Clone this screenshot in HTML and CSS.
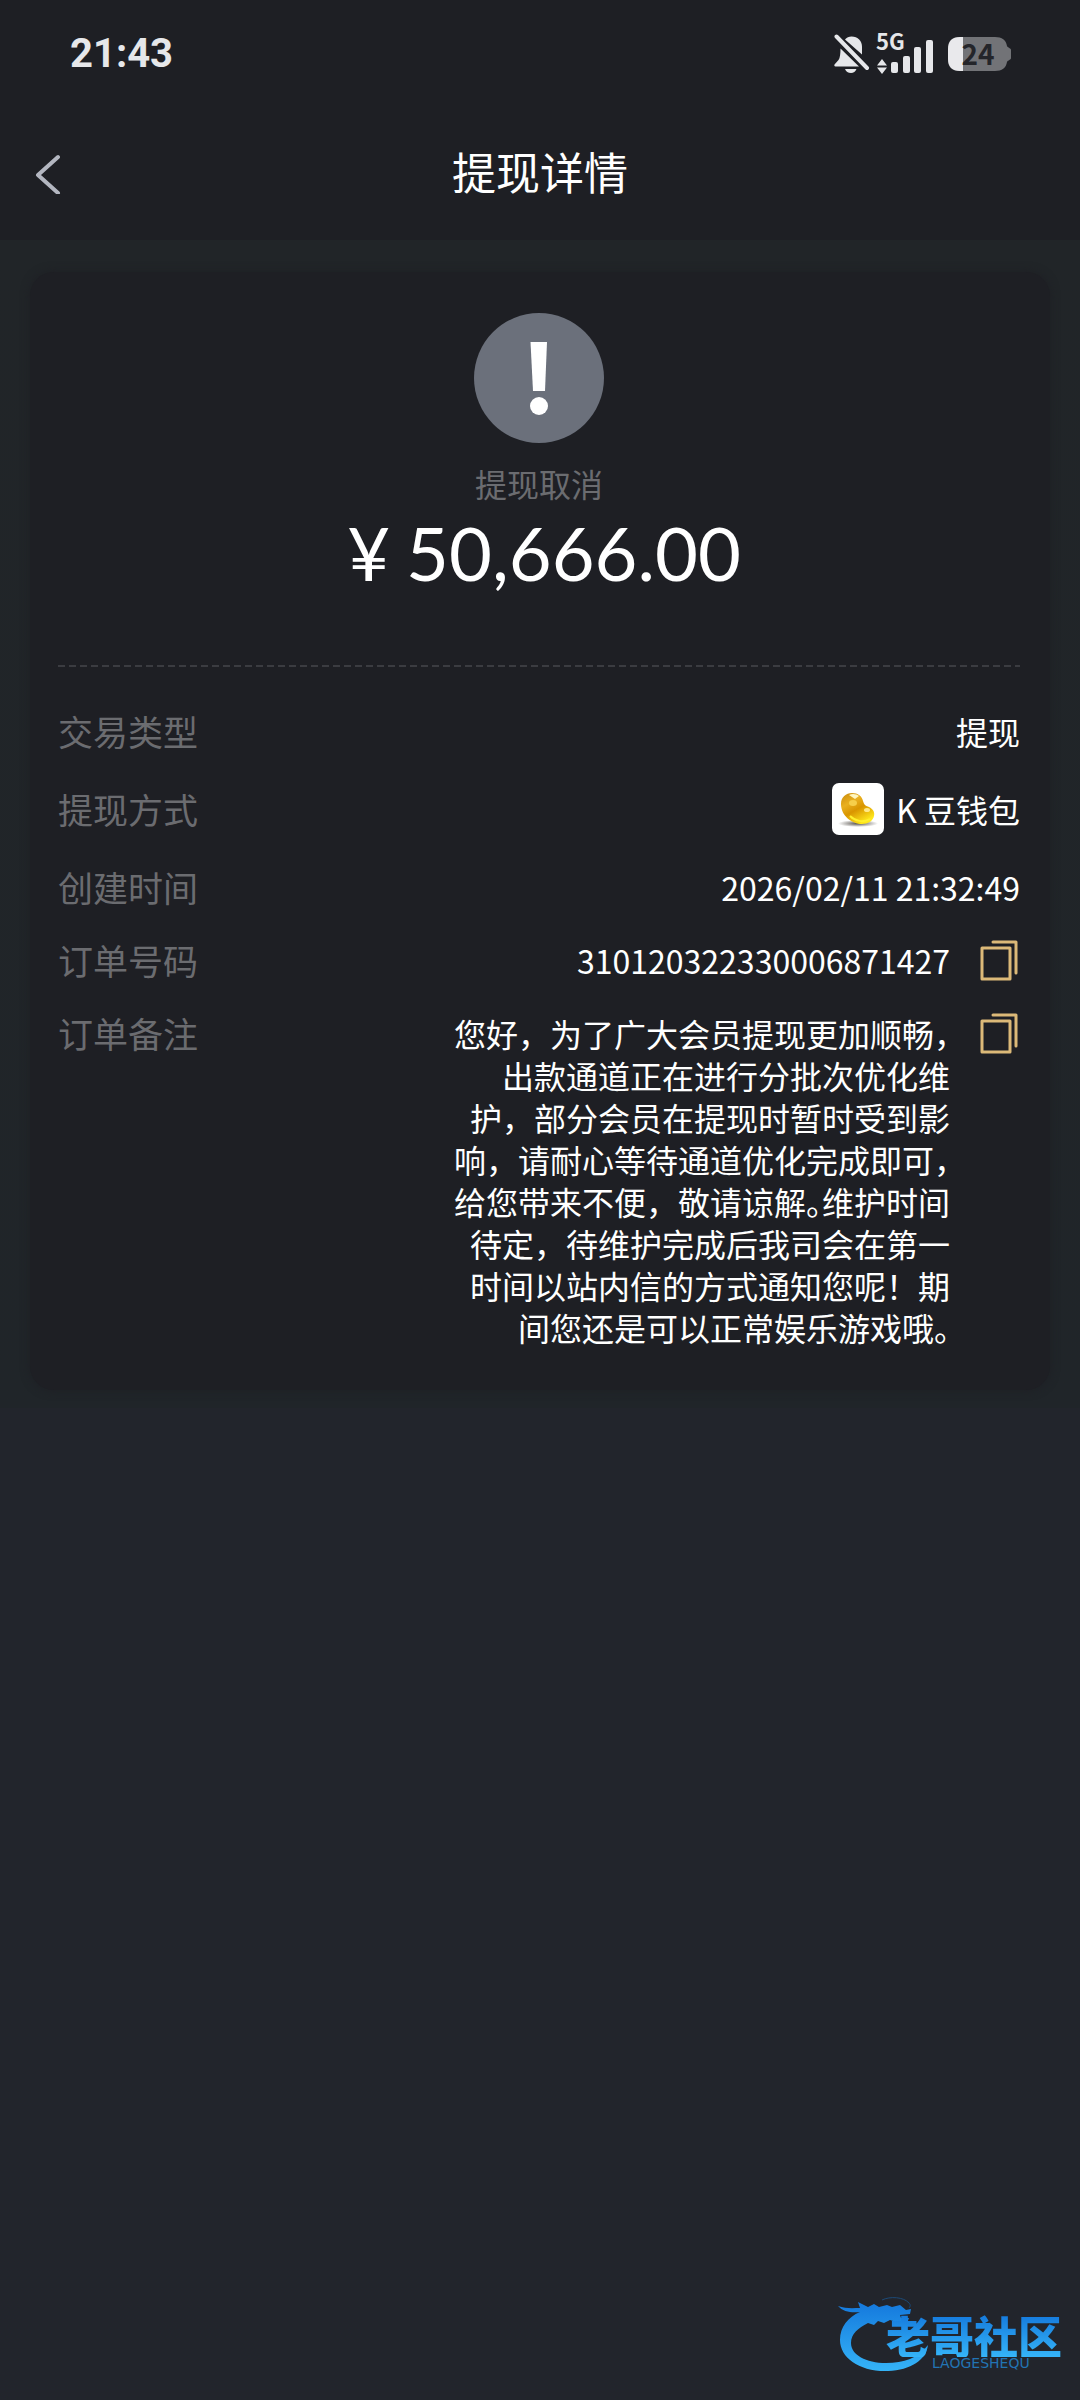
FILE: index.html
```html
<!DOCTYPE html>
<html lang="zh-CN">
<head>
<meta charset="utf-8">
<meta name="viewport" content="width=device-width, initial-scale=1">
<title>提现详情</title>
<link rel="stylesheet" href="styles.css">
</head>
<body>
<header class="top">
  <div class="status">
    <time class="clock">21:43</time>
    <div class="indicators">
      <svg class="bell" width="36" height="40" viewBox="0 0 36 40" aria-label="静音">
        <g fill="#e6e7ea">
          <path d="M11 5.500C12.500 3.500 15 2.500 17.500 2.500C24 2.500 28 7 28 13V20.500Z"/>
          <path d="M6.500 14.500L25 32.500H1.500C0.500 32.500 0 31.500 0.500 30.500L4.500 26C6 24 6.500 20 6.500 14.500Z"/>
          <path d="M11 35H22.500C21.500 37.500 19.500 39 17 39C14 39 12 37.500 11 35Z"/>
        </g>
        <path d="M2.500 2.500L33 34" fill="none" stroke="#e6e7ea" stroke-width="4" stroke-linecap="round"/>
      </svg>
      <div class="signal">
        <span class="net">5G</span>
        <svg width="58" height="40" viewBox="0 0 58 40" aria-hidden="true">
          <g fill="#e6e7ea">
            <path d="M6 25L11 31.500H1ZM6 40L1 33.500H11Z"/>
            <rect x="15" y="28" width="7" height="11" rx="2"/>
            <rect x="27" y="22" width="7" height="17" rx="2"/>
            <rect x="38" y="13" width="7" height="26" rx="2"/>
            <rect x="50" y="6" width="7" height="33" rx="2"/>
          </g>
        </svg>
      </div>
      <div class="battery">
        <svg width="64" height="34" viewBox="0 0 64 34" aria-hidden="true">
          <path d="M12 0H47C54 0 58 3 59 9C60 11 63 11 63 13V21C63 23 60 23 59 25C58 31 54 34 47 34H12C4 34 0 30 0 22V12C0 4 4 0 12 0Z" fill="#727377"/>
          <path d="M15 0H12C4 0 0 4 0 12V22C0 30 4 34 12 34H15Z" fill="#e9e9ec"/>
        </svg>
        <span class="level">24</span>
      </div>
    </div>
  </div>
  <nav class="bar">
    <button class="back" type="button" aria-label="返回">
      <svg width="26" height="40" viewBox="0 0 26 40" aria-hidden="true"><path d="M23 3L3 21L23 39" fill="none" stroke="#b3b6c0" stroke-width="4" stroke-linecap="round" stroke-linejoin="round"/></svg>
    </button>
    <h1 class="title">提现详情</h1>
  </nav>
</header>

<main class="page">
  <section class="card">
    <div class="summary">
      <svg class="mark" width="130" height="130" viewBox="0 0 130 130" aria-hidden="true">
        <circle cx="65" cy="65" r="65" fill="#6b707b"/>
        <path d="M56.500 29H73L71 78H59Z" fill="#fff"/>
        <circle cx="65" cy="93" r="9" fill="#fff"/>
      </svg>
      <p class="state">提现取消</p>
      <p class="amount"><span class="yen">¥</span><span>50,666.00</span></p>
    </div>
    <svg class="rule" height="2" aria-hidden="true"><line x1="0" y1="1" x2="100%" y2="1" stroke="#3b3c41" stroke-width="2" stroke-dasharray="7 4"/></svg>
    <dl class="details">
      <div class="row"><dt>交易类型</dt><dd>提现</dd></div>
      <div class="row wallet">
        <dt>提现方式</dt>
        <dd>
          <svg width="52" height="52" viewBox="0 0 52 52" aria-hidden="true">
            <defs>
              <linearGradient id="bean" x1="0" y1="0" x2="0.600" y2="1">
                <stop offset="0" stop-color="#c98a0c"/><stop offset="0.350" stop-color="#e9b020"/>
                <stop offset="0.600" stop-color="#d99500"/><stop offset="1" stop-color="#ffe81c"/>
              </linearGradient>
              <radialGradient id="shade"><stop offset="0" stop-color="#55504a"/><stop offset="1" stop-color="#fff"/></radialGradient>
            </defs>
            <rect width="52" height="52" rx="7" fill="#fff"/>
            <ellipse cx="26" cy="40.500" rx="20" ry="3.500" fill="url(#shade)"/>
            <path d="M9 21C9 14 14 10 20 10C26 10 30 13 31 18C32 22 34 23 37 24C41 26 43 29 42 33C41 38 36 41 30 41C20 41 9 33 9 21Z" fill="url(#bean)"/>
            <path d="M17 12C20 10 25 11 27 13L23 16Z" fill="#fff6c0"/>
            <ellipse cx="21" cy="20" rx="4" ry="3" fill="#f6cf4a"/>
            <ellipse cx="35" cy="27" rx="3" ry="2" fill="#ffe88a"/>
            <path d="M18 33C23 38 31 40 38 36" fill="none" stroke="#fff02e" stroke-width="2"/>
          </svg>
          <span>K 豆钱包</span>
        </dd>
      </div>
      <div class="row"><dt>创建时间</dt><dd>2026/02/11 21:32:49</dd></div>
      <div class="row">
        <dt>订单号码</dt>
        <dd>
          <span>310120322330006871427</span>
          <button class="copy" type="button" aria-label="复制订单号码">
            <svg width="40" height="42" viewBox="0 0 40 42" aria-hidden="true"><g fill="none" stroke="#dcb978" stroke-width="3" stroke-linejoin="round" stroke-linecap="round"><rect x="2" y="9" width="28" height="31"/><path d="M13 3H36V34"/></g></svg>
          </button>
        </dd>
      </div>
      <div class="row">
        <dt>订单备注</dt>
        <dd>
          <p class="note">
            <span>您好，为了广大会员提现更加顺畅<i>，</i></span>
            <span>出款通道正在进行分批次优化维</span>
            <span>护，部分会员在提现时暂时受到影</span>
            <span>响，请耐心等待通道优化完成即可<i>，</i></span>
            <span>给您带来不便，敬请谅解<i>。</i>维护时间</span>
            <span>待定，待维护完成后我司会在第一</span>
            <span>时间以站内信的方式通知您呢！期</span>
            <span>间您还是可以正常娱乐游戏哦<i>。</i></span>
          </p>
          <button class="copy" type="button" aria-label="复制订单备注">
            <svg width="40" height="42" viewBox="0 0 40 42" aria-hidden="true"><g fill="none" stroke="#dcb978" stroke-width="3" stroke-linejoin="round" stroke-linecap="round"><rect x="2" y="9" width="28" height="31"/><path d="M13 3H36V34"/></g></svg>
          </button>
        </dd>
      </div>
    </dl>
  </section>
</main>

<aside class="brand">
  <svg class="dragon" width="96" height="80" viewBox="0 0 96 80" aria-hidden="true">
    <defs><linearGradient id="blue" x1="0" y1="0" x2="0" y2="1"><stop offset="0" stop-color="#1478dc"/><stop offset="1" stop-color="#35b4f8"/></linearGradient></defs>
    <path fill="url(#blue)" d="M0 10C8 13 16 12 22 12L20 6L30 11L36 8L41 11L49 9L54 11L62 9L68 14L73 13L72 18L62 19L63 22L71 22L69 27L58 26L52 24L46 27L40 25L36 29L30 27C20 32 13 38 13 47C13 59 28 67 48 67C66 67 80 62 90 49C88 64 73 74 50 75C22 76 2 62 2 44C2 31 10 21 22 16C14 17 5 16 0 10Z"/>
    <path fill="none" stroke="#1c4a78" stroke-width="1" d="M44 4C52 0 66 1 71 7C73 9 72 11 71 12"/>
  </svg>
  <div class="wordmark">
    <span class="name">老哥社区</span>
    <span class="latin">LAOGESHEQU</span>
  </div>
</aside>
</body>
</html>
```
FILE: styles.css
```css
* { box-sizing: border-box; }
body {
  margin: 0;
  position: relative;
  min-height: 100vh;
  background: #22252c;
  color: #fff;
  font-family: "Noto Sans CJK SC", sans-serif;
}
h1, p, dl, dd { margin: 0; }
button { padding: 0; border: 0; background: none; cursor: pointer; }
svg { display: block; flex: none; }

.top { height: 240px; background: #1e1f24; }
.status {
  display: flex;
  justify-content: space-between;
  align-items: center;
  height: 108px;
  padding: 0 68px 0 70px;
  color: #e6e7ea;
}
.clock { font: 700 40px/48px Roboto, sans-serif; }
.indicators { display: flex; align-items: center; gap: 6px; }
.signal { position: relative; }
.net { position: absolute; left: 0; top: -5px; font-size: 22px; line-height: 22px; font-weight: 700; }
.battery { position: relative; margin-left: 8px; }
.level {
  position: absolute;
  inset: 0 4px 0 0;
  text-align: center;
  font-size: 28px;
  line-height: 32px;
  font-weight: 700;
  color: #24252a;
}
.bar { display: grid; grid-template-columns: 64px 1fr 64px; align-items: center; height: 132px; }
.back { justify-self: end; padding-right: 3px; }
.title { padding-bottom: 6px; text-align: center; font-size: 44px; line-height: 60px; font-weight: 400; }

.page {
  padding: 32px 30px 18px;
  background: linear-gradient(#212528, #202529);
}
.card {
  padding: 41px 30px 42px 28px;
  border-radius: 24px;
  background: #1e1f24;
  box-shadow: 0 0 10px #1e1f24;
}
.summary { display: flex; flex-direction: column; align-items: center; padding-bottom: 64px; }
.state { margin-top: 18px; font-size: 32px; line-height: 44px; color: #6b6c70; }
.amount {
  display: flex;
  gap: 16px;
  padding-left: 10px;
  font-family: Lato, "Noto Sans CJK SC", sans-serif;
  font-size: 74px;
  line-height: 96px;
}
.rule { width: 100%; }

.details { display: flex; flex-direction: column; gap: 31px; margin-top: 43px; font-size: 32px; line-height: 42px; }
.row { display: flex; justify-content: space-between; }
.row.wallet { align-items: center; }
dt { font-size: 35px; line-height: 42px; color: #6b6c70; }
dd { display: flex; gap: 30px; }
.wallet dd { align-items: center; gap: 12px; }
.copy { display: flex; align-self: flex-start; }
.note { text-align: right; }
.note span { display: block; white-space: nowrap; }
.note i { font-style: normal; font-feature-settings: "halt"; }

.brand { position: absolute; right: 18px; bottom: 24px; display: flex; }
.wordmark { display: flex; flex-direction: column; margin-left: -48px; padding-top: 17px; }
.name {
  font-size: 44px;
  line-height: 44px;
  font-weight: 900;
  background: linear-gradient(#1478dc, #35b4f8);
  background-clip: text;
  color: transparent;
}
.latin { padding-left: 46px; font: 14px/12px "DejaVu Sans", sans-serif; color: #2274b4; }
```
